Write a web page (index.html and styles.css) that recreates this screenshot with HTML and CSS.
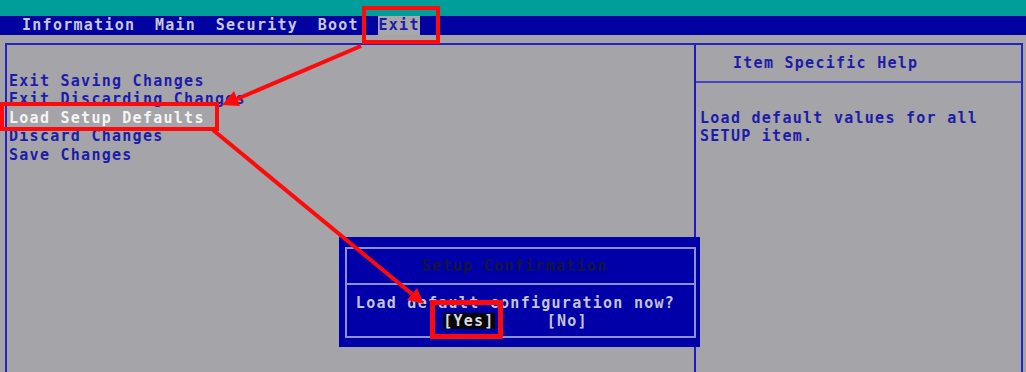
FILE: index.html
```html
<!DOCTYPE html>
<html lang="en">
<head>
    <meta charset="UTF-8">
    <title>BIOS Setup - Exit</title>
    <link rel="stylesheet" href="styles.css">
</head>
<body>

    <div class="topbar"></div>

    <div class="menubar">
        <span class="tab">Information</span>
        <span class="tab">Main</span>
        <span class="tab">Security</span>
        <span class="tab">Boot</span>
        <span class="tab active">Exit</span>
    </div>

    <div class="frame">
        <div class="items">
            <div class="item">Exit Saving Changes</div>
            <div class="item">Exit Discarding Changes</div>
            <div class="item selected">Load Setup Defaults</div>
            <div class="item">Discard Changes</div>
            <div class="item">Save Changes</div>
        </div>
        <div class="help">
            <div class="help-title">Item Specific Help</div>
            <div class="help-text">
                <div>Load default values for all</div>
                <div>SETUP item.</div>
            </div>
        </div>

        <div class="dialog">
            <div class="dialog-inner">
                <div class="dialog-title">Setup Confirmation</div>
                <div class="dialog-body">
                    <div>Load default configuration now?</div>
                    <div class="choices">
                        <span class="choice current">[Yes]</span>
                        <span class="choice">[No]</span>
                    </div>
                </div>
            </div>
        </div>
    </div>

    <!-- red annotation marks -->
    <svg class="marks" width="1026" height="372" viewBox="0 0 1026 372">
        <g fill="none" stroke="#ff0a0a">
            <rect x="364" y="8" width="74" height="34" stroke-width="4"/>
            <rect x="2" y="104" width="215" height="25" stroke-width="4"/>
            <rect x="432.5" y="302.5" width="68" height="34" stroke-width="5"/>
            <line x1="361" y1="46" x2="237" y2="99" stroke-width="4"/>
            <line x1="213" y1="130" x2="412" y2="294" stroke-width="4"/>
        </g>
        <g fill="#ff0a0a">
            <polygon points="222,105 240,106 234,91"/>
            <polygon points="424,304 407,300 417,288"/>
        </g>
    </svg>

</body>
</html>
```

FILE: styles.css
```css
body {
    margin: 0;
    height: 100vh;
    display: flex;
    flex-direction: column;
    overflow: hidden;
    background-color: #a5a4a8;
    font-family: 'DejaVu Sans Mono', 'Liberation Mono', monospace;
    font-weight: bold;
    font-size: 15px;
    letter-spacing: 1.27px;
    color: #1c1ca8;
}

.topbar {
    height: 16px;
    background-color: #009e9a;
}

.menubar {
    height: 19px;
    display: flex;
    align-items: center;
    gap: 19.6px;
    padding-left: 22px;
    background-color: #0202a0;
    color: #c8c8dc;
}

.tab {
    line-height: 19px;
}

.tab.active {
    background-color: #a8a7ab;
    color: #1c1ca8;
    margin-left: -1px;
    padding: 0 0 0 1px;
}

.frame {
    position: relative;
    flex: 1;
    margin: 8px 3px 0 5px;
    border: 2px solid #2424c0;
    border-bottom: none;
    display: grid;
    grid-template-columns: 689px 1fr;
}

.items {
    padding: 27px 0 0 2px;
    border-right: 2px solid #1c1cc0;
}

.item {
    height: 18.4px;
    line-height: 18.4px;
}

.item.selected {
    color: #f4f4f4;
}

.help-title {
    height: 36px;
    line-height: 36px;
    padding-left: 37px;
    border-bottom: 2px solid #4646c4;
}

.help-text {
    padding: 26px 0 0 4px;
}

.help-text div {
    height: 18.4px;
    line-height: 18.4px;
}

/* popup over the page */
.dialog {
    position: absolute;
    left: 332px;
    top: 192px;
    width: 351px;
    height: 91px;
    padding: 10px 4px 9px 6px;
    background-color: #0000a8;
    color: #c4c4d4;
}

.dialog-inner {
    height: 100%;
    box-sizing: border-box;
    border: 2px solid #9090c8;
}

.dialog-title {
    height: 34px;
    line-height: 34px;
    text-align: center;
    padding-right: 12px;
    border-bottom: 2px solid #9090c8;
    color: #14143c;
}

.dialog-body {
    padding: 9px 10px 0 0;
    text-align: center;
    line-height: 18px;
}

.choices {
    display: flex;
    justify-content: center;
    gap: 52px;
    height: 18px;
    align-items: center;
}

.choice {
    line-height: 16px;
}

.choice.current {
    background-color: #050508;
    color: #d8d8e0;
}

.marks {
    position: absolute;
    top: 0;
    left: 0;
    pointer-events: none;
}
```
